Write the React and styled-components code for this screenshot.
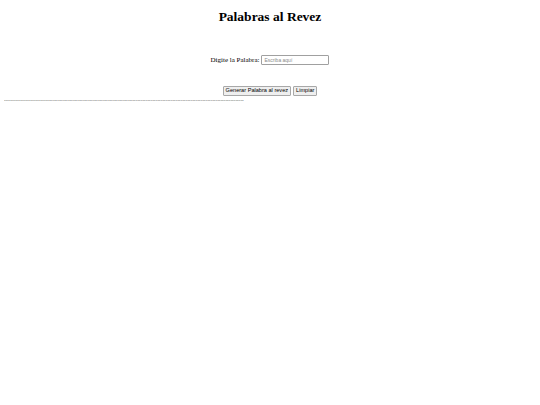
import styled, { createGlobalStyle } from "styled-components";

const GlobalStyle = createGlobalStyle`
  body {
    margin: 4px;
    font-family: "Liberation Serif", serif;
    background: #fff;
    color: #000;
  }
`;

const Title = styled.h1`
  margin: 5px 0 0;
  font-size: 13.5px;
  font-weight: bold;
  text-align: center;
`;

const Field = styled.div`
  margin-top: 30px;
  display: flex;
  justify-content: center;
  align-items: center;
  gap: 2px;
  font-size: 7px;
`;

const Input = styled.input`
  width: 62px;
  height: 8px;
  padding: 0 2px;
  border: 1px solid #a0a0a0;
  border-radius: 1px;
  font-family: "Liberation Sans", sans-serif;
  font-size: 5px;
  outline: none;
  &::placeholder {
    color: #8a8a8a;
  }
`;

const Actions = styled.div`
  margin-top: 21px;
  display: flex;
  justify-content: center;
  gap: 2px;
`;

const Button = styled.button`
  height: 10px;
  padding: 0 2px;
  border: 1px solid #a8a8a8;
  border-radius: 1px;
  background: #efefef;
  font-family: "Liberation Sans", sans-serif;
  font-size: 5.6px;
  line-height: 1;
  color: #000;
`;

const Divider = styled.div`
  margin-top: 2px;
  font-size: 5px;
  line-height: 5px;
`;

export default function App() {
  return (
    <>
      <GlobalStyle />
      <Title>Palabras al Revez</Title>
      <Field>
        <label>Digite la Palabra:</label>
        <Input type="text" placeholder="Escriba aquí" />
      </Field>
      <Actions>
        <Button>Generar Palabra al revez</Button>
        <Button>Limpiar</Button>
      </Actions>
      <Divider>{"-".repeat(144)}</Divider>
    </>
  );
}
